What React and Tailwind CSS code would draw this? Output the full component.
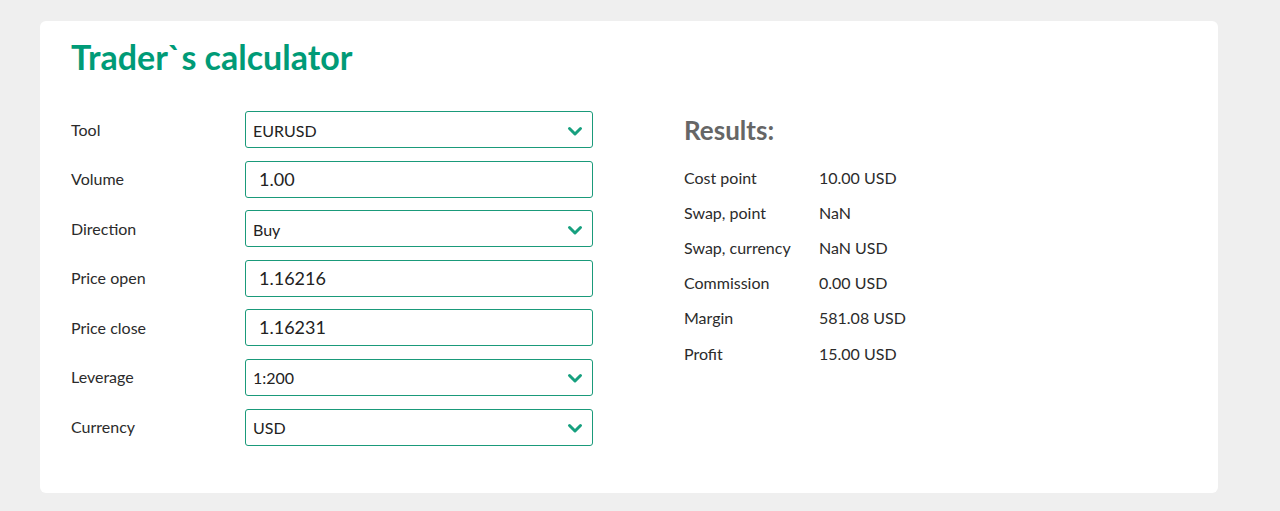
const fields = [
  { label: "Tool", value: "EURUSD", select: true },
  { label: "Volume", value: "1.00" },
  { label: "Direction", value: "Buy", select: true },
  { label: "Price open", value: "1.16216" },
  { label: "Price close", value: "1.16231" },
  { label: "Leverage", value: "1:200", select: true },
  { label: "Currency", value: "USD", select: true },
];

const results = [
  ["Cost point", "10.00 USD"],
  ["Swap, point", "NaN"],
  ["Swap, currency", "NaN USD"],
  ["Commission", "0.00 USD"],
  ["Margin", "581.08 USD"],
  ["Profit", "15.00 USD"],
];

const Chevron = () => (
  <svg width="16" height="12" viewBox="0 0 16 12" className="shrink-0">
    <path d="M2.5 3.5 L8 9 L13.5 3.5" fill="none" stroke="#17a07f" strokeWidth="3" strokeLinecap="round" strokeLinejoin="round" />
  </svg>
);

const App = () => {
  return (
    <div className="min-h-[511px] bg-[#efefef] px-10 pt-[21px] font-['Lato','Open_Sans',sans-serif]">
      <div className="h-[472px] w-[1178px] rounded-md bg-white pl-[31px] pt-[16px]">
        <h1 className="text-[34px] font-bold leading-[40px] text-[#009b77]">Trader`s calculator</h1>

        <div className="mt-[34px] flex">
          {/* Form */}
          <div className="flex w-[522px] flex-col gap-[12.6px]">
            {fields.map((f) => (
              <div key={f.label} className="flex items-center">
                <div className="w-[174px] text-[16px] text-[#2b2b2b]">{f.label}</div>
                {f.select ? (
                  <div className="flex h-[37px] w-[348px] items-center justify-between rounded-[3px] border border-[#1a9a7a] pl-[7px] pr-[9px] pt-[2px] text-[16px] text-[#222]">
                    <span>{f.value}</span>
                    <Chevron />
                  </div>
                ) : (
                  <div className="flex h-[37px] w-[348px] items-center rounded-[3px] border border-[#1a9a7a] pl-[13px] text-[18px] text-[#222]">
                    {f.value}
                  </div>
                )}
              </div>
            ))}
          </div>

          {/* Results */}
          <div className="ml-[91px] pt-[3px]">
            <h2 className="text-[26px] font-bold leading-[32px] text-[#666]">Results:</h2>
            <div className="mt-[14px] flex flex-col">
              {results.map(([k, v]) => (
                <div key={k} className="flex h-[35.2px] items-center text-[16px] text-[#2b2b2b]">
                  <div className="w-[135px]">{k}</div>
                  <div>{v}</div>
                </div>
              ))}
            </div>
          </div>
        </div>
      </div>
    </div>
  );
};

export default App;
